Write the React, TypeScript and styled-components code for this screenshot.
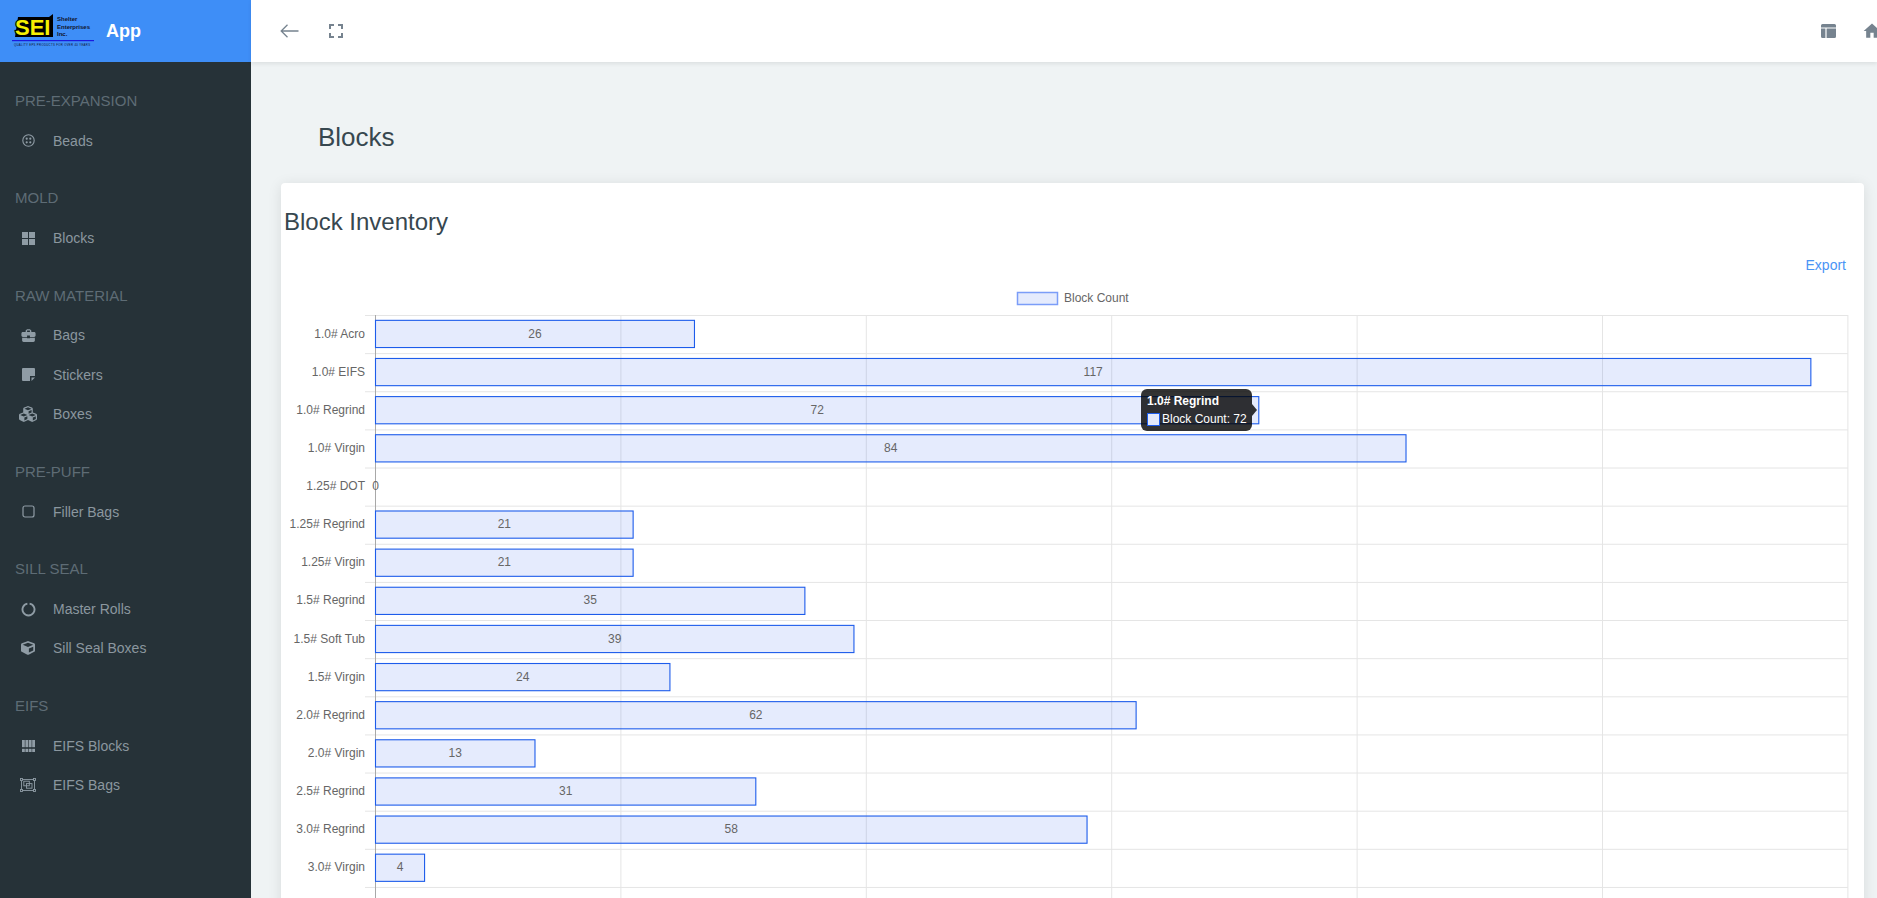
import styled, { createGlobalStyle } from 'styled-components';
import { FaCube, FaCubes } from 'react-icons/fa';
import { MdBusinessCenter, MdHome } from 'react-icons/md';

const GlobalStyle = createGlobalStyle`
  html, body {
    margin: 0;
    padding: 0;
    height: 100%;
    overflow: hidden;
    background: #eff3f4;
    font-family: 'Liberation Sans', Arial, sans-serif;
  }
`;

const Shell = styled.div`
  display: flex;
  width: 1877px;
  height: 898px;
  overflow: hidden;
`;

const Sidebar = styled.aside`
  flex: 0 0 251px;
  display: flex;
  flex-direction: column;
  background: #263238;
`;

const Brand = styled.div`
  display: flex;
  align-items: center;
  height: 62px;
  background: #3e8ef7;
  padding-left: 12px;
`;

const BrandName = styled.span`
  margin-left: 10px;
  font-size: 18px;
  font-weight: 700;
  color: #fff;
`;

const Nav = styled.nav`
  display: flex;
  flex-direction: column;
  gap: 19px;
  padding-top: 19px;
`;

const NavGroup = styled.div`
  display: flex;
  flex-direction: column;
`;

const NavLabel = styled.div`
  height: 39px;
  line-height: 39px;
  padding-left: 15px;
  font-size: 15px;
  color: #5e6c75;
`;

const NavItem = styled.a`
  display: flex;
  align-items: center;
  box-sizing: border-box;
  height: 39.4px;
  padding: 2px 0 0 15px;
  font-size: 14px;
  color: #8b979f;
`;

const NavIcon = styled.span`
  flex: 0 0 26px;
  display: flex;
  align-items: center;
  justify-content: center;
  margin-right: 12px;
  color: #8f9ca5;
`;

const Main = styled.main`
  flex: 1;
  min-width: 0;
  display: flex;
  flex-direction: column;
`;

const TopBar = styled.header`
  position: relative;
  z-index: 1;
  flex: 0 0 62px;
  display: flex;
  align-items: center;
  justify-content: space-between;
  background: #fff;
  box-shadow: 0 2px 4px rgba(0, 0, 0, 0.08);
  padding-left: 29px;
`;

const ToolGroup = styled.div<{ $gap: number; $pull?: number }>`
  display: flex;
  align-items: center;
  gap: ${(p) => p.$gap}px;
  margin-right: ${(p) => -(p.$pull ?? 0)}px;
  color: #76838f;
`;

const ToolIcon = styled.span`
  display: flex;
  flex-shrink: 0;
`;

const Page = styled.div`
  flex: 1;
  padding: 60px 13px 0 30px;
`;

const PageTitle = styled.h1`
  margin: 0 0 31px 37px;
  font-size: 26px;
  line-height: 30px;
  font-weight: 400;
  color: #37474f;
`;

const Card = styled.section`
  background: #fff;
  border-radius: 4px;
  box-shadow: 0 2px 14px rgba(0, 0, 0, 0.1);
  padding-top: 24px;
  height: 800px;
`;

const CardTitle = styled.h3`
  margin: 0;
  padding-left: 3px;
  font-size: 24px;
  line-height: 30px;
  font-weight: 400;
  color: #37474f;
`;

const ExportRow = styled.div`
  display: flex;
  justify-content: flex-end;
  margin-top: 18px;
  padding-right: 18px;
`;

const ExportLink = styled.a`
  font-size: 14px;
  line-height: 20px;
  color: #4a94f5;
`;

const ChartWrap = styled.div`
  position: relative;
  margin-top: 10px;
`;

const ChartSvg = styled.svg`
  display: block;
  font-family: 'Liberation Sans', Arial, sans-serif;
  font-size: 12px;
`;

const Tooltip = styled.div`
  position: absolute;
  left: 860px;
  top: 104px;
  width: 111px;
  height: 42px;
  box-sizing: border-box;
  padding: 5px 6px;
  border-radius: 6px;
  background: rgba(0, 0, 0, 0.8);
  color: #fff;
  font-size: 12px;
  line-height: 14px;

  &::after {
    content: '';
    position: absolute;
    top: 15px;
    right: -5px;
    border-style: solid;
    border-width: 6px 0 6px 5px;
    border-color: transparent transparent transparent rgba(0, 0, 0, 0.8);
  }
`;

const TooltipTitle = styled.div`
  font-weight: 700;
  margin-bottom: 4px;
`;

const TooltipRow = styled.div`
  display: flex;
  align-items: center;
  gap: 2px;
  white-space: nowrap;
`;

const Swatch = styled.span`
  flex: 0 0 13px;
  height: 13px;
  box-sizing: border-box;
  border: 1px solid #1d5ceb;
  background: #e3e9fc;
`;

const rows: [string, number][] = [
  ['1.0# Acro', 26],
  ['1.0# EIFS', 117],
  ['1.0# Regrind', 72],
  ['1.0# Virgin', 84],
  ['1.25# DOT', 0],
  ['1.25# Regrind', 21],
  ['1.25# Virgin', 21],
  ['1.5# Regrind', 35],
  ['1.5# Soft Tub', 39],
  ['1.5# Virgin', 24],
  ['2.0# Regrind', 62],
  ['2.0# Virgin', 13],
  ['2.5# Regrind', 31],
  ['3.0# Regrind', 58],
  ['3.0# Virgin', 4],
];

const axisX = 94.5;
const chartTop = 30;
const rowHeight = 38.13;
const unit = 12.268;
const chartWidth = 1583;
const chartHeight = 620;

function BarChart() {
  const bottom = chartTop + rowHeight * rows.length;
  return (
    <ChartSvg width={chartWidth} height={chartHeight}>
      <rect x={736.5} y={7.5} width={40} height={12} fill="#e5ebfd" stroke="#7b9df8" strokeWidth={1.5} />
      <text x={783} y={17} fill="#666">Block Count</text>

      {[1, 2, 3, 4, 5, 6].map((n) => (
        <line key={n} x1={axisX + n * 245.4} x2={axisX + n * 245.4} y1={chartTop} y2={chartHeight} stroke="#e5e5e5" />
      ))}
      {rows.map((_, i) => (
        <line key={i} x1={84} x2={axisX + 1472.4} y1={chartTop + i * rowHeight + 0.5} y2={chartTop + i * rowHeight + 0.5} stroke="#e5e5e5" />
      ))}
      <line x1={84} x2={axisX + 1472.4} y1={bottom + 0.5} y2={bottom + 0.5} stroke="#e5e5e5" />
      <line x1={axisX} x2={axisX} y1={chartTop} y2={chartHeight} stroke="#a8a8a8" />

      {rows.map(([label, value], i) => {
        const y = chartTop + i * rowHeight;
        const w = value * unit;
        return (
          <g key={label}>
            <text x={84} y={y + 22.5} textAnchor="end" fill="#666">{label}</text>
            {value > 0 && (
              <rect x={axisX} y={y + 5.34} width={w} height={27.2} fill="rgba(40, 90, 240, 0.12)" stroke="#1d5ceb" strokeWidth={1.1} />
            )}
            <text x={axisX + w / 2} y={y + 22.5} textAnchor="middle" fill="#666">{value}</text>
          </g>
        );
      })}
    </ChartSvg>
  );
}

function Logo() {
  return (
    <svg width="84" height="34" viewBox="0 0 84 34">
      <path d="M6 3 H37 L41 0 V23 H3 Z" fill="#000" />
      <text x="3" y="20.5" fontFamily="'Liberation Sans', Arial, sans-serif" fontWeight="700" fontSize="22" fill="#f6f000" stroke="#000" strokeWidth="2" paintOrder="stroke">SEI</text>
      <g fontFamily="'Liberation Sans', Arial, sans-serif" fontWeight="700" fontSize="6" fill="#10132c">
        <text x="45" y="7">Shelter</text>
        <text x="45" y="14.5">Enterprises</text>
        <text x="45" y="21.5">Inc.</text>
      </g>
      <rect x="0" y="26" width="82" height="1.2" fill="#1a1ae0" />
      <text x="2" y="31.5" fontFamily="'Liberation Sans', Arial, sans-serif" fontSize="2.8" fill="#10132c" textLength="76">QUALITY EPS PRODUCTS FOR OVER 40 YEARS</text>
    </svg>
  );
}

const BeadsIcon = () => (
  <svg width="13" height="13" viewBox="0 0 13 13" fill="none" stroke="currentColor">
    <circle cx="6.5" cy="6.5" r="5.7" strokeWidth="1.1" />
    <g fill="currentColor" stroke="none">
      <circle cx="4.7" cy="4.7" r="1.1" />
      <circle cx="8.3" cy="4.7" r="1.1" />
      <circle cx="4.7" cy="8.3" r="1.1" />
      <circle cx="8.3" cy="8.3" r="1.1" />
    </g>
  </svg>
);

const GridIcon = () => (
  <svg width="13" height="13" viewBox="0 0 13 13" fill="currentColor">
    <rect x="0" y="0" width="6" height="6" />
    <rect x="7" y="0" width="6" height="6" />
    <rect x="0" y="7" width="6" height="6" />
    <rect x="7" y="7" width="6" height="6" />
  </svg>
);

const StickerIcon = () => (
  <svg width="13" height="13" viewBox="0 0 13 13" fill="currentColor">
    <path d="M1 0 H12 A1 1 0 0 1 13 1 V8 H8 V13 H1 A1 1 0 0 1 0 12 V1 A1 1 0 0 1 1 0 Z" />
    <path d="M9.5 9.5 H13 L9.5 13 Z" />
  </svg>
);

const SquareIcon = () => (
  <svg width="13" height="13" viewBox="0 0 13 13" fill="none" stroke="currentColor" strokeWidth="1.2">
    <rect x="1" y="1" width="11" height="11" rx="2" />
  </svg>
);

const RingIcon = () => (
  <svg width="15" height="15" viewBox="0 0 15 15" fill="none" stroke="currentColor" strokeWidth="1.9">
    <path d="M8.6 1.6 A6 6 0 1 1 6.4 1.6" />
  </svg>
);

const ModulesIcon = () => (
  <svg width="13" height="12" viewBox="0 0 13 12" fill="currentColor">
    {[0, 3.4, 6.8, 10.2].map((x) => (
      <g key={x}>
        <rect x={x} y={0} width="2.8" height="7.2" />
        <rect x={x} y={8.8} width="2.8" height="3.2" />
      </g>
    ))}
  </svg>
);

const SelectGroupIcon = () => (
  <svg width="16" height="14" viewBox="0 0 16 14" fill="none" stroke="currentColor" strokeWidth="0.9">
    <rect x="1.5" y="1.5" width="13" height="11" />
    <rect x="0.5" y="0.5" width="2" height="2" fill="#263238" />
    <rect x="13.5" y="0.5" width="2" height="2" fill="#263238" />
    <rect x="0.5" y="11.5" width="2" height="2" fill="#263238" />
    <rect x="13.5" y="11.5" width="2" height="2" fill="#263238" />
    <rect x="3.8" y="3.2" width="5.5" height="4.6" />
    <rect x="6.5" y="5.6" width="5.5" height="4.6" />
  </svg>
);

const BackIcon = () => (
  <svg width="19" height="14" viewBox="0 0 19 14" fill="none" stroke="currentColor" strokeWidth="1.3">
    <path d="M18.5 7 H1.5 M7.5 0.8 L1.2 7 L7.5 13.2" />
  </svg>
);

const FullscreenIcon = () => (
  <svg width="14" height="14" viewBox="0 0 14 14" fill="none" stroke="currentColor" strokeWidth="2">
    <path d="M1 5 V1 H5 M9 1 H13 V5 M13 9 V13 H9 M5 13 H1 V9" />
  </svg>
);

const LayoutIcon = () => (
  <svg width="15" height="14" viewBox="0 0 15 14" fill="currentColor">
    <path d="M1.5 0 H13.5 A1.5 1.5 0 0 1 15 1.5 V3.4 H0 V1.5 A1.5 1.5 0 0 1 1.5 0 Z" />
    <path d="M0 4.6 H4.4 V14 H1.5 A1.5 1.5 0 0 1 0 12.5 Z" />
    <path d="M5.6 4.6 H15 V12.5 A1.5 1.5 0 0 1 13.5 14 H5.6 Z" />
  </svg>
);

type Item = { label: string; icon: JSX.Element };

const groups: { title: string; items: Item[] }[] = [
  { title: 'PRE-EXPANSION', items: [{ label: 'Beads', icon: <BeadsIcon /> }] },
  { title: 'MOLD', items: [{ label: 'Blocks', icon: <GridIcon /> }] },
  {
    title: 'RAW MATERIAL',
    items: [
      { label: 'Bags', icon: <MdBusinessCenter size={17} /> },
      { label: 'Stickers', icon: <StickerIcon /> },
      { label: 'Boxes', icon: <FaCubes size={18} /> },
    ],
  },
  { title: 'PRE-PUFF', items: [{ label: 'Filler Bags', icon: <SquareIcon /> }] },
  {
    title: 'SILL SEAL',
    items: [
      { label: 'Master Rolls', icon: <RingIcon /> },
      { label: 'Sill Seal Boxes', icon: <FaCube size={14} /> },
    ],
  },
  {
    title: 'EIFS',
    items: [
      { label: 'EIFS Blocks', icon: <ModulesIcon /> },
      { label: 'EIFS Bags', icon: <SelectGroupIcon /> },
    ],
  },
];

function App() {
  return (
    <Shell>
      <GlobalStyle />
      <Sidebar>
        <Brand>
          <Logo />
          <BrandName>App</BrandName>
        </Brand>
        <Nav>
          {groups.map((group) => (
            <NavGroup key={group.title}>
              <NavLabel>{group.title}</NavLabel>
              {group.items.map((item) => (
                <NavItem key={item.label}>
                  <NavIcon>{item.icon}</NavIcon>
                  {item.label}
                </NavItem>
              ))}
            </NavGroup>
          ))}
        </Nav>
      </Sidebar>
      <Main>
        <TopBar>
          <ToolGroup $gap={30}>
            <ToolIcon><BackIcon /></ToolIcon>
            <ToolIcon><FullscreenIcon /></ToolIcon>
          </ToolGroup>
          <ToolGroup $gap={26} $pull={5}>
            <ToolIcon><LayoutIcon /></ToolIcon>
            <ToolIcon><MdHome size={20} /></ToolIcon>
          </ToolGroup>
        </TopBar>
        <Page>
          <PageTitle>Blocks</PageTitle>
          <Card>
            <CardTitle>Block Inventory</CardTitle>
            <ExportRow>
              <ExportLink>Export</ExportLink>
            </ExportRow>
            <ChartWrap>
              <BarChart />
              <Tooltip>
                <TooltipTitle>1.0# Regrind</TooltipTitle>
                <TooltipRow>
                  <Swatch />
                  Block Count: 72
                </TooltipRow>
              </Tooltip>
            </ChartWrap>
          </Card>
        </Page>
      </Main>
    </Shell>
  );
}

export default App;
